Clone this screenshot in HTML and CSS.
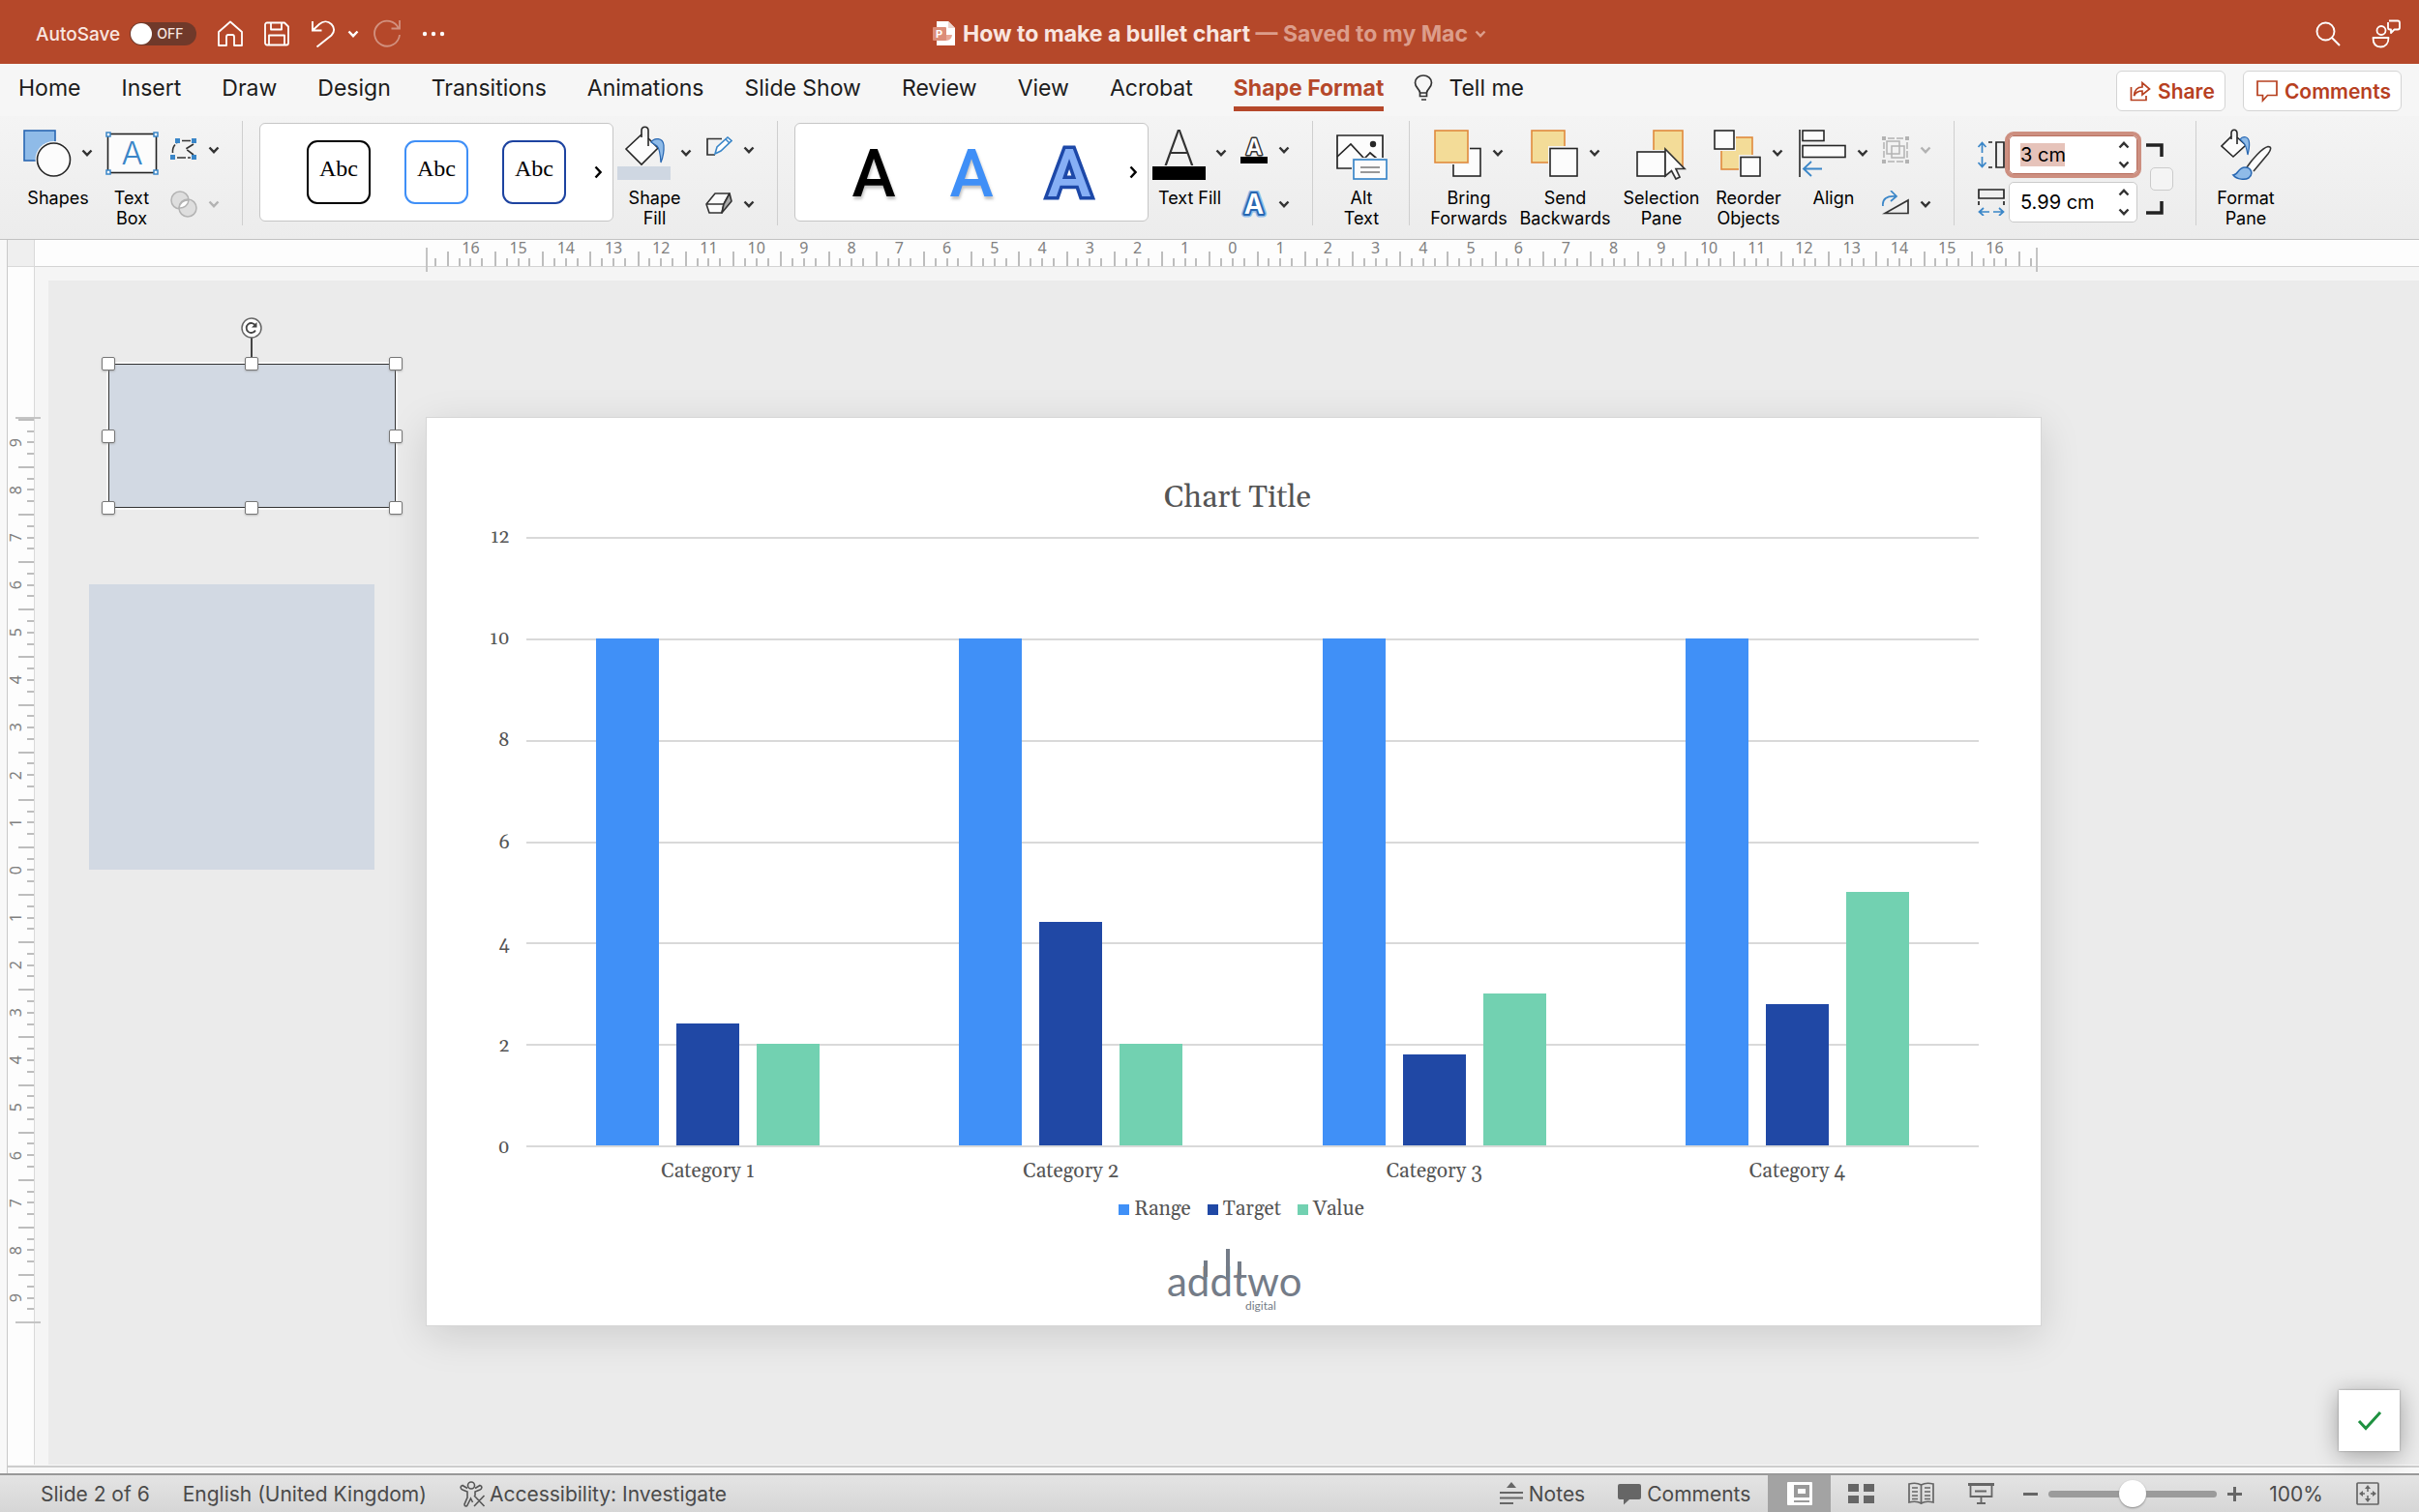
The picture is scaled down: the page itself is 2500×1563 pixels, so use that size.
FILE: index.html
```html
<!DOCTYPE html>
<html lang="en-GB">
<head>
<meta charset="utf-8">
<meta name="viewport" content="width=device-width, initial-scale=1">
<title>How to make a bullet chart</title>
<link rel="stylesheet" href="styles.css">
</head>
<body>
<svg class="defs" aria-hidden="true">
  <symbol id="chev" viewBox="0 0 12 8"><path d="M1.5 1.5 6 6.2 10.500 1.500" fill="none" stroke="currentColor" stroke-width="2.400"/></symbol>
  <symbol id="chev-up" viewBox="0 0 12 8"><path d="M1.500 6.500 6 1.800 10.500 6.500" fill="none" stroke="currentColor" stroke-width="2.400"/></symbol>
  <symbol id="chev-right" viewBox="0 0 8 14"><path d="M1.500 1.500 6.500 7 1.500 12.500" fill="none" stroke="currentColor" stroke-width="2.400"/></symbol>
</svg>

<header class="titlebar">
  <div class="quick">
    <label class="autosave" for="autosave">AutoSave</label>
    <span class="toggle"><input type="checkbox" id="autosave"><span class="toggle-text">OFF</span></span>
    <button class="qbtn" aria-label="Home"><svg width="26" height="28" viewBox="0 0 26 28"><path d="M1 12 13 1.500 25 12V26H17V17a2 2 0 0 0-2-2h-4a2 2 0 0 0-2 2V26H1Z" fill="none" stroke="#fff" stroke-width="1.800" stroke-linejoin="round"/></svg></button>
    <button class="qbtn" aria-label="Save"><svg width="26" height="28" viewBox="0 0 26 28"><path d="M3 2.500H21L25 6.500V23.500a2 2 0 0 1-2 2H3a2 2 0 0 1-2-2V4.500a2 2 0 0 1 2-2ZM7 3V9.500H18V3M5 25V15.500H21V25" fill="none" stroke="#fff" stroke-width="1.800" stroke-linejoin="round"/></svg></button>
    <span class="undo">
      <button class="qbtn" aria-label="Undo"><svg width="26" height="28" viewBox="0 0 26 28"><path d="M2 1V10.500H11.500M2 10.500 9 4C13 .500 18 .500 21.500 4s3.500 8 0 11.500L6.500 27.500" fill="none" stroke="#fff" stroke-width="1.900"/></svg></button>
      <button class="qbtn" aria-label="Undo options"><svg class="chev"><use href="#chev"/></svg></button>
    </span>
    <button class="qbtn faded" aria-label="Repeat"><svg width="28" height="30" viewBox="0 0 28 30"><path d="M27 1V9.500H18.500M26 9.500A13 13 0 1 0 27 16" fill="none" stroke="#fff" stroke-width="1.800"/></svg></button>
    <button class="qbtn" aria-label="More"><svg width="24" height="6" viewBox="0 0 24 6"><circle cx="3" cy="3" r="2.200" fill="#fff"/><circle cx="12" cy="3" r="2.200" fill="#fff"/><circle cx="21" cy="3" r="2.200" fill="#fff"/></svg></button>
  </div>
  <h1 class="doc">
    <svg width="24" height="26" viewBox="0 0 24 26"><path d="M4 0H16L23 7V25H4Z" fill="#fff"/><path d="M16 0V7H23Z" fill="#eed5ce"/><path d="M14 8a6 6 0 1 0 6 6h-6Z" fill="#e8a796"/><rect x="0" y="6" width="14" height="14" rx="1" fill="#dc8d78"/><text x="3" y="17" font-size="11" font-weight="700" fill="#fff">P</text></svg>
    <span>How to make a bullet chart <span class="saved">— Saved to my Mac</span></span>
    <svg class="chev saved"><use href="#chev"/></svg>
  </h1>
  <div class="quick right">
    <button class="qbtn" aria-label="Search"><svg width="26" height="26" viewBox="0 0 26 26"><circle cx="10.500" cy="10.500" r="9" fill="none" stroke="#fff" stroke-width="1.900"/><path d="M17 17 25 25" stroke="#fff" stroke-width="1.900"/></svg></button>
    <button class="qbtn" aria-label="Account and feedback"><svg width="30" height="30" viewBox="0 0 30 30"><g fill="none" stroke="#fff" stroke-width="1.800" stroke-linejoin="round"><circle cx="10" cy="11.500" r="4.500"/><path d="M1.500 19h16c0 6-3 9.500-8 9.500s-8-3.500-8-9.500ZM18 1.500h9a2 2 0 0 1 2 2v5a2 2 0 0 1-2 2h-3.500L20 14v-3.500h-1a2 2 0 0 1-2-2V3"/></g></svg></button>
  </div>
</header>

<nav class="tabs">
  <div class="tablist">
    <button>Home</button><button>Insert</button><button>Draw</button><button>Design</button><button>Transitions</button><button>Animations</button><button>Slide Show</button><button>Review</button><button>View</button><button>Acrobat</button><button class="active">Shape Format</button>
    <button class="tell"><svg width="20" height="28" viewBox="0 0 20 28"><path d="M6.500 19C6.500 15 1.500 14 1.500 8.500a8.500 7.500 0 0 1 17 0C18.500 14 13.500 15 13.500 19v3.500h-7ZM6.500 19h7M8 26h5" fill="none" stroke="#333" stroke-width="1.700"/></svg>Tell me</button>
  </div>
  <div class="actions">
    <button class="pill"><svg width="22" height="24" viewBox="0 0 22 24"><path d="M1.500 8V21.500H17V17M4.500 17C5 11 8 8 13 8V3.500L20.500 10 13 16V12C9 12 6.500 13 4.500 17Z" fill="none" stroke="#b7401f" stroke-width="1.700"/></svg>Share</button>
    <button class="pill"><svg width="22" height="24" viewBox="0 0 22 24"><path d="M1 2H21V16.500H11.500L6.500 22V16.500H1Z" fill="none" stroke="#b7401f" stroke-width="1.700"/></svg>Comments</button>
  </div>
</nav>

<section class="ribbon" aria-label="Shape Format">
  <div class="group">
    <button class="tool w72"><span class="pic"><svg width="50" height="56" viewBox="0 0 50 56"><rect x="1" y="5" width="32" height="31" fill="#8fbbe8" stroke="#2867b2" stroke-width="1.600"/><circle cx="31.500" cy="35" r="19" fill="#f4f4f4"/><circle cx="31.500" cy="35" r="17" fill="#fcfcfc" stroke="#262626" stroke-width="1.600"/></svg><svg class="chev"><use href="#chev"/></svg></span><span>Shapes</span></button>
    <button class="tool w55"><span class="pic"><svg width="55" height="56" viewBox="0 0 55 56"><rect x="2.500" y="8.500" width="50" height="40" fill="#fcfcfc" stroke="#222" stroke-width="1.600"/><g fill="#fff" stroke="#3a86c8" stroke-width="1.500"><rect x="1" y="7" width="4" height="4"/><rect x="50" y="7" width="4" height="4"/><rect x="1" y="46" width="4" height="4"/><rect x="50" y="46" width="4" height="4"/></g><text x="27.500" y="40" font-size="33" font-weight="300" text-anchor="middle" fill="#3a86c8">A</text></svg></span><span>Text<br>Box</span></button>
    <div class="stack">
      <button class="mini" aria-label="Edit shape"><svg width="28" height="28" viewBox="0 0 28 28"><path d="M12 4.500H21M2.500 17C2 12 4.500 8 7 7M24 8 16 13 24 19M7 22H21" fill="none" stroke="#333" stroke-width="1.600" stroke-dasharray="9 2"/><g fill="#3a86c8"><rect x="5" y="2" width="5" height="5"/><rect x="22" y="2" width="5" height="5"/><rect x="0" y="19" width="5" height="5"/><rect x="22" y="19" width="5" height="5"/></g></svg><svg class="chev"><use href="#chev"/></svg></button>
      <button class="mini off" aria-label="Merge shapes" disabled><svg width="28" height="28" viewBox="0 0 28 28"><g fill="#dedede" stroke="#b3b3b3" stroke-width="1.500"><circle cx="10" cy="10" r="9"/><circle cx="18" cy="18" r="9"/><path d="M9 18A9 9 0 0 1 19 10 9 9 0 0 1 9 18Z" fill="#fff"/></g></svg><svg class="chev"><use href="#chev"/></svg></button>
    </div>
  </div>
  <div class="group styles">
    <div class="gallery">
      <button class="abc k">Abc</button><button class="abc b">Abc</button><button class="abc n">Abc</button>
      <button class="more" aria-label="More styles"><svg width="8" height="14"><use href="#chev-right"/></svg></button>
    </div>
    <button class="tool w75"><span class="pic"><svg width="55" height="56" viewBox="0 0 55 56"><rect x="0" y="42" width="55" height="14" fill="#cfd7e2"/><path d="M25 9 9 24 25 40 42 23 32 13" fill="#fcfcfc" stroke="#262626" stroke-width="1.600"/><path d="M25 12V5c0-5 7-5 7 0V21" fill="none" stroke="#262626" stroke-width="1.600"/><path d="M35 17C38 12 47 12 48 20 48.500 27 47 33 45 38 44.500 30 44 24 41 21Z" fill="#8fbbe8" stroke="#2867b2" stroke-width="1.200"/></svg><svg class="chev"><use href="#chev"/></svg></span><span>Shape<br>Fill</span></button>
    <div class="stack">
      <button class="mini" aria-label="Shape outline"><svg width="28" height="28" viewBox="0 0 28 28"><path d="M17 2.500H2V19H10" fill="none" stroke="#333" stroke-width="1.700"/><path d="M10 18 12 11 23 1 27 4.500 16 15Z M21 3 25 7" fill="#fff" stroke="#3a86c8" stroke-width="1.600"/></svg><svg class="chev"><use href="#chev"/></svg></button>
      <button class="mini" aria-label="Shape effects"><svg width="28" height="28" viewBox="0 0 28 28"><path d="M1 14 10 3H25L19 14ZM1 14 4 23H17L19 14" fill="#fcfcfc" stroke="#333" stroke-width="1.600" stroke-linejoin="round"/><path d="M25 3 27 11 17 23 19 14Z" fill="#aaa" stroke="#333" stroke-width="1.600" stroke-linejoin="round"/></svg><svg class="chev"><use href="#chev"/></svg></button>
    </div>
  </div>
  <div class="group styles">
    <div class="gallery">
      <button class="wa k">A</button><button class="wa b">A</button><button class="wa n">A</button>
      <button class="more" aria-label="More text styles"><svg width="8" height="14"><use href="#chev-right"/></svg></button>
    </div>
    <button class="tool w75"><span class="pic"><svg width="55" height="56" viewBox="0 0 55 56"><text x="27.500" y="41" font-size="50" font-weight="200" text-anchor="middle" fill="#333">A</text><rect x="0" y="42" width="55" height="14"/></svg><svg class="chev"><use href="#chev"/></svg></span><span>Text Fill</span></button>
    <div class="stack">
      <button class="mini" aria-label="Text outline"><svg width="28" height="28" viewBox="0 0 28 28"><text class="outlined" x="14" y="19" font-size="23" text-anchor="middle" fill="#fff" stroke="#333" stroke-width="3">A</text><rect x="0" y="21" width="28" height="7"/></svg><svg class="chev"><use href="#chev"/></svg></button>
      <button class="mini" aria-label="Text effects"><svg width="28" height="28" viewBox="0 0 28 28"><text class="outlined" x="14" y="24" font-size="28" text-anchor="middle" fill="#fff" stroke="#8fbbe8" stroke-width="7">A</text><text class="outlined" x="14" y="24" font-size="28" text-anchor="middle" fill="#fff" stroke="#2867b2" stroke-width="4">A</text></svg><svg class="chev"><use href="#chev"/></svg></button>
    </div>
  </div>
  <div class="group alt">
    <button class="tool w55"><span class="pic"><svg width="53" height="56" viewBox="0 0 53 56"><path d="M1 10H48V44H1Z" fill="#fcfcfc" stroke="#262626" stroke-width="1.700"/><path d="M1 32 15 19 29 34 35 28 42 34" fill="none" stroke="#262626" stroke-width="1.700"/><circle cx="38" cy="19" r="3.200" fill="#262626"/><rect x="16" y="33" width="37" height="23" fill="#f4f4f4"/><rect x="18" y="35" width="34" height="20" fill="#fcfcfc" stroke="#3a86c8" stroke-width="1.700"/><path d="M25 43H45M25 48H45" stroke="#777" stroke-width="1.500"/></svg></span><span>Alt<br>Text</span></button>
  </div>
  <div class="group arrange">
    <button class="tool w80"><span class="pic"><svg width="50" height="56" viewBox="0 0 50 56"><rect x="20" y="23.500" width="28" height="28.500" fill="#fcfcfc" stroke="#262626" stroke-width="1.600"/><rect x="0" y="4" width="37" height="36" fill="#f4f4f4"/><rect x="1" y="5" width="34" height="33" fill="#f3dc98" stroke="#e08a3c" stroke-width="1.600"/></svg><svg class="chev"><use href="#chev"/></svg></span><span>Bring<br>Forwards</span></button>
    <button class="tool w95"><span class="pic"><svg width="50" height="56" viewBox="0 0 50 56"><rect x="1" y="5" width="34" height="33" fill="#f3dc98" stroke="#e08a3c" stroke-width="1.600"/><rect x="18" y="21" width="32" height="33" fill="#f4f4f4"/><rect x="20" y="23.500" width="28" height="28.500" fill="#fcfcfc" stroke="#262626" stroke-width="1.600"/></svg><svg class="chev"><use href="#chev"/></svg></span><span>Send<br>Backwards</span></button>
    <button class="tool w80"><span class="pic"><svg width="52" height="56" viewBox="0 0 52 56"><rect x="18" y="5" width="30" height="38" fill="#f3dc98" stroke="#e08a3c" stroke-width="1.600"/><rect x="0" y="25" width="31" height="29" fill="#f4f4f4"/><rect x="1" y="27" width="29" height="25" fill="#fcfcfc" stroke="#262626" stroke-width="1.600"/><path d="M30 24V52L36.500 46.500 41 55 45 53 41 44.500H50Z" fill="#fcfcfc" stroke="#333" stroke-width="1.700"/></svg></span><span>Selection<br>Pane</span></button>
    <button class="tool w76"><span class="pic"><svg width="50" height="56" viewBox="0 0 50 56"><rect x="8" y="12" width="32" height="33" fill="#f3dc98" stroke="#e08a3c" stroke-width="1.600"/><rect x="0" y="4" width="23" height="22" fill="#f4f4f4"/><rect x="1" y="5" width="20" height="19" fill="#fcfcfc" stroke="#262626" stroke-width="1.600"/><rect x="26" y="30" width="24" height="24" fill="#f4f4f4"/><rect x="28" y="32.500" width="20" height="19.500" fill="#fcfcfc" stroke="#262626" stroke-width="1.600"/></svg><svg class="chev"><use href="#chev"/></svg></span><span>Reorder<br>Objects</span></button>
    <button class="tool w76"><span class="pic"><svg width="50" height="56" viewBox="0 0 50 56"><path d="M1 4V53" stroke="#262626" stroke-width="1.600"/><g fill="#fcfcfc" stroke="#262626" stroke-width="1.600"><rect x="4" y="5" width="22" height="10.500"/><rect x="4" y="20.500" width="44" height="12"/></g><path d="M5 44.500H24M13 37 5 44.500 13 52" fill="none" stroke="#3a86c8" stroke-width="1.800"/></svg><svg class="chev"><use href="#chev"/></svg></span><span>Align</span></button>
    <div class="stack">
      <button class="mini off" aria-label="Group" disabled><svg width="28" height="28" viewBox="0 0 28 28"><path d="M6 2H22M6 26H22M2 6V22M26 6V22" fill="none" stroke="#b3b3b3" stroke-width="1.500" stroke-dasharray="7 2"/><path d="M5 5H18V18H5ZM10 10H23V22H10Z" fill="none" stroke="#b3b3b3" stroke-width="1.500"/><path d="M0 0H4V4H0ZM24 0H28V4H24ZM0 24H4V28H0ZM24 24H28V28H24Z" fill="#b3b3b3"/></svg><svg class="chev"><use href="#chev"/></svg></button>
      <button class="mini" aria-label="Rotate"><svg width="28" height="28" viewBox="0 0 28 28"><path d="M3 23.500H27V10Z" fill="none" stroke="#333" stroke-width="1.700"/><path d="M1 16C0 9 5 5 14 6M9 0 15 6 9 11" fill="none" stroke="#3a86c8" stroke-width="1.700"/></svg><svg class="chev"><use href="#chev"/></svg></button>
    </div>
  </div>
  <div class="group size">
    <div class="fields">
      <div class="field focus">
        <label for="height" aria-label="Height"><svg width="28" height="28" viewBox="0 0 28 28"><path d="M4.500 2V12M.500 6 4.500 1.500 8.500 6M4.500 16V26M.500 22 4.500 26.500 8.500 22" fill="none" stroke="#3a86c8" stroke-width="1.700"/><path d="M11 1H15M11 27H15M19 1H27V27H19Z" fill="none" stroke="#262626" stroke-width="1.700"/></svg></label>
        <span class="box"><input id="height" type="text" value="3 cm" size="4"><span class="spin"><button aria-label="Increase height"><svg class="chev"><use href="#chev-up"/></svg></button><button aria-label="Decrease height"><svg class="chev"><use href="#chev"/></svg></button></span></span>
      </div>
      <div class="field">
        <label for="width" aria-label="Width"><svg width="28" height="28" viewBox="0 0 28 28"><path d="M1 1H27V10H1ZM1 13V17M27 13V17" fill="none" stroke="#262626" stroke-width="1.700"/><path d="M2 24H12M6 20 1.500 24 6 28M16 24H26M22 20 26.500 24 22 28" fill="none" stroke="#3a86c8" stroke-width="1.700"/></svg></label>
        <span class="box"><input id="width" type="text" value="5.99 cm" size="7"><span class="spin"><button aria-label="Increase width"><svg class="chev"><use href="#chev-up"/></svg></button><button aria-label="Decrease width"><svg class="chev"><use href="#chev"/></svg></button></span></span>
      </div>
    </div>
    <div class="lock">
      <svg width="18" height="15" viewBox="0 0 18 15"><path d="M0 2H16V14" fill="none" stroke="#222" stroke-width="3.500"/></svg>
      <input type="checkbox" aria-label="Lock aspect ratio">
      <svg width="18" height="15" viewBox="0 0 18 15"><path d="M0 13H16V1" fill="none" stroke="#222" stroke-width="3.500"/></svg>
    </div>
  </div>
  <div class="group">
    <button class="tool w55"><span class="pic"><svg width="53" height="56" viewBox="0 0 53 56"><path d="M11 11 1 21 13 32 26 20 17 12" fill="#fcfcfc" stroke="#262626" stroke-width="1.600"/><path d="M11 14V8c0-5 6-5 6 0V19" fill="none" stroke="#262626" stroke-width="1.600"/><path d="M20 14C23 10 29 11 29.500 17 30 22 29 26 28 30 27 24 26 19 23 17Z" fill="#8fbbe8" stroke="#2867b2" stroke-width="1.200"/><path d="M27 43C33 34 43 23 49 21.500 53 21.500 52 25 49 29L34 47" fill="#fcfcfc" stroke="#333" stroke-width="1.600"/><path d="M13 51C18 51 18 43 25 43 32 43 34 50 29 54 25 56 17 56 13 51Z" fill="#8fbbe8" stroke="#2867b2" stroke-width="1.500"/></svg></span><span>Format<br>Pane</span></button>
  </div>
</section>

<main class="workspace">
  <div class="corner"></div>
  <div class="hruler"><div class="track">
    <span>16</span><span>15</span><span>14</span><span>13</span><span>12</span><span>11</span><span>10</span><span>9</span><span>8</span><span>7</span><span>6</span><span>5</span><span>4</span><span>3</span><span>2</span><span>1</span><span>0</span><span>1</span><span>2</span><span>3</span><span>4</span><span>5</span><span>6</span><span>7</span><span>8</span><span>9</span><span>10</span><span>11</span><span>12</span><span>13</span><span>14</span><span>15</span><span>16</span>
  </div></div>
  <div class="vruler"><div class="track">
    <span><b>9</b></span><span><b>8</b></span><span><b>7</b></span><span><b>6</b></span><span><b>5</b></span><span><b>4</b></span><span><b>3</b></span><span><b>2</b></span><span><b>1</b></span><span><b>0</b></span><span><b>1</b></span><span><b>2</b></span><span><b>3</b></span><span><b>4</b></span><span><b>5</b></span><span><b>6</b></span><span><b>7</b></span><span><b>8</b></span><span><b>9</b></span>
  </div></div>
  <div class="surround">
    <div class="canvas">
      <div class="shape selected">
        <i class="stem"></i>
        <svg class="rotate" width="22" height="22" viewBox="0 0 22 22"><circle cx="11" cy="11" r="10" fill="#fff" stroke="#666" stroke-width="1.500"/><path d="M15 13.500A5 5 0 1 1 15 8.500" fill="none" stroke="#444" stroke-width="1.800"/><path d="M16.500 5V10.500H11Z" fill="#444"/></svg>
        <i class="handle n w"></i><i class="handle n c"></i><i class="handle n e"></i>
        <i class="handle m w"></i><i class="handle m e"></i>
        <i class="handle s w"></i><i class="handle s c"></i><i class="handle s e"></i>
      </div>
      <div class="shape plain"></div>
      <article class="slide">
        <h2>Chart Title</h2>
        <div class="chart">
          <div class="yaxis"><span>12</span><span>10</span><span>8</span><span>6</span><span>4</span><span>2</span><span>0</span></div>
          <div class="plot">
            <div class="grid"><i></i><i></i><i></i><i></i><i></i><i></i></div>
            <div class="bars">
              <div class="cat"><i class="range" style="height:83.3%"></i><i class="target" style="height:20%"></i><i class="value" style="height:16.7%"></i></div>
              <div class="cat"><i class="range" style="height:83.3%"></i><i class="target" style="height:36.7%"></i><i class="value" style="height:16.7%"></i></div>
              <div class="cat"><i class="range" style="height:83.3%"></i><i class="target" style="height:15%"></i><i class="value" style="height:25%"></i></div>
              <div class="cat"><i class="range" style="height:83.3%"></i><i class="target" style="height:23.3%"></i><i class="value" style="height:41.7%"></i></div>
            </div>
          </div>
          <div class="xaxis"><span>Category 1</span><span>Category 2</span><span>Category 3</span><span>Category 4</span></div>
        </div>
        <ul class="legend"><li><i class="range"></i>Range</li><li><i class="target"></i>Target</li><li><i class="value"></i>Value</li></ul>
        <svg class="logo" width="138" height="66" viewBox="0 0 138 66" role="img" aria-label="addtwo digital">
          <g fill="#747c88"><text x="0" y="50" font-family="Lato, sans-serif" font-size="42">addtwo</text><text x="81" y="64" font-family="Lato, sans-serif" font-size="12">digital</text></g>
          <path d="M40 13V30M63 1V30M75 14V32" stroke="#747c88" stroke-width="4"/>
        </svg>
      </article>
      <button class="done" aria-label="Done"><svg width="26" height="22" viewBox="0 0 26 22"><path d="M2 11 9 18.500 24 2" fill="none" stroke="#1e9140" stroke-width="3"/></svg></button>
    </div>
  </div>
  <div class="edge"></div>
</main>

<footer class="status">
  <div class="info">
    <span>Slide 2 of 6</span><button>English (United Kingdom)</button>
    <button class="acc"><svg width="27" height="27" viewBox="0 0 27 27"><g fill="none" stroke="#555" stroke-width="1.600"><circle cx="12" cy="4.500" r="3.500"/><path d="M8 7.500 3 4.500C0 5.500 1 8 3 9L8 11V17L5 24C5 26.500 7.500 26.500 8 25L11.500 18 13.500 22M16 7.500 21 4.500C24 5.500 23 8 21 9L16 11V15M15 15 25.500 26M25.500 15 15 26"/></g></svg>Accessibility: Investigate</button>
  </div>
  <div class="views">
    <button class="txt"><svg width="24" height="24" viewBox="0 0 24 24"><path d="M12 0 17 6H7Z" fill="#666"/><path d="M0 11H24M0 16.500H24M0 22H14" stroke="#666" stroke-width="2"/></svg>Notes</button>
    <button class="txt"><svg width="24" height="24" viewBox="0 0 24 24"><path d="M2 2H22A2 2 0 0 1 24 4V16A2 2 0 0 1 22 18H12L6 23.500V18H2A2 2 0 0 1 0 16V4A2 2 0 0 1 2 2Z" fill="#666"/></svg>Comments</button>
    <button class="view on" aria-label="Normal view"><svg width="26" height="24" viewBox="0 0 26 24"><rect width="26" height="24" rx="1" fill="#fff"/><path d="M7 3H23V16H7ZM7 19H23V21H7Z" fill="#9a9a9a"/><path d="M11 7H19V12H11Z" fill="#fff"/></svg></button>
    <button class="view" aria-label="Slide sorter"><svg width="27" height="20" viewBox="0 0 27 20"><path d="M0 0H11V8H0ZM16 0H27V8H16ZM0 12H11V20H0ZM16 12H27V20H16Z" fill="#666"/></svg></button>
    <button class="view" aria-label="Reading view"><svg width="27" height="24" viewBox="0 0 27 24"><g fill="none" stroke="#666" stroke-width="1.700"><path d="M13.500 3C10 1 5 1 1 2V21C5 20 10 20 13.500 22 17 20 22 20 26 21V2C22 1 17 1 13.500 3ZM13.500 3V23M4 6H10M4 10H10M4 14H10M4 17.500H10M17 6H23M17 10H23M17 14H23M17 17.500H23"/></g></svg></button>
    <button class="view" aria-label="Slide show"><svg width="27" height="22" viewBox="0 0 27 22"><path d="M0 1.500H27" stroke="#666" stroke-width="3"/><path d="M2.500 2V14H24.500V2M7 8.500H19M13.500 14V20M9 21H18" fill="none" stroke="#666" stroke-width="1.800"/></svg></button>
    <div class="zoom">
      <button aria-label="Zoom out"><svg width="15" height="15" viewBox="0 0 15 15"><path d="M0 7.500H15" stroke="#666" stroke-width="3"/></svg></button>
      <input type="range" min="0" max="100" value="50" aria-label="Zoom">
      <button aria-label="Zoom in"><svg width="15" height="15" viewBox="0 0 15 15"><path d="M0 7.500H15M7.500 0V15" stroke="#666" stroke-width="3"/></svg></button>
    </div>
    <button class="pct">100%</button>
    <button class="fit" aria-label="Fit to window"><svg width="24" height="24" viewBox="0 0 24 24"><rect x="1" y="1" width="22" height="22" rx="1" fill="none" stroke="#666" stroke-width="1.700"/><path d="M12 3 15 7H9ZM12 21 15 17H9ZM3 12 7 9V15ZM21 12 17 9V15Z" fill="#666"/><path d="M12 6V10M12 14V18M6 12H9M15 12H18" stroke="#666" stroke-width="1.500"/></svg></button>
  </div>
</footer>
</body>
</html>
```
FILE: styles.css
```css
:root {
  --brand: #b5482a;
  --slide-w: calc((100vw - 50px) * 0.681);
  --slide-h: calc(var(--slide-w) * 9 / 16);
  --tick: linear-gradient(#bdbdbd, #bdbdbd);
}
* { box-sizing: border-box; }
body {
  margin: 0;
  min-height: 100vh;
  display: flex;
  flex-direction: column;
  font-family: Inter, "Liberation Sans", sans-serif;
  font-size: 18px;
  color: #1c1c1c;
  background: #f8f8f8;
}
button {
  font: inherit;
  color: inherit;
  background: none;
  border: 0;
  padding: 0;
  white-space: nowrap;
}
svg { display: block; flex: none; }
.defs { position: absolute; width: 0; height: 0; }
.chev { width: 12px; height: 8px; color: #333; }
.outlined { font-weight: 600; paint-order: stroke fill; stroke-linejoin: round; }

/* title bar */
.titlebar {
  display: grid;
  grid-template-columns: 1fr auto 1fr;
  align-items: center;
  height: 66px;
  padding: 4px 37px 0;
  background: var(--brand);
  color: #f9e6e0;
}
.quick { display: flex; align-items: center; gap: 22px; }
.quick.right { justify-content: flex-end; gap: 32px; margin-right: -18px; }
.quick .chev { color: #fff; }
.autosave { font-size: 19px; font-weight: 500; margin-right: -12px; }
.toggle {
  position: relative;
  width: 69px;
  height: 24px;
}
.toggle input {
  appearance: none;
  display: block;
  margin: 0;
  width: 69px;
  height: 24px;
  border-radius: 12px;
  background: #70392a;
}
.toggle input::before {
  content: "";
  display: block;
  width: 22px;
  height: 22px;
  margin: 1px;
  float: left;
  border-radius: 50%;
  background: #fff;
}
.toggle-text {
  position: absolute;
  left: 28px;
  top: 0;
  font-size: 14px;
  line-height: 24px;
  font-weight: 500;
}
.undo { display: flex; align-items: center; gap: 12px; margin-right: -7px; }
.faded { opacity: 0.4; }
.doc {
  display: flex;
  align-items: center;
  gap: 7px;
  margin: 0;
  font-size: 23px;
  font-weight: 700;
}
.saved, .doc .chev { color: #dc9d8b; }

/* tabs */
.tabs {
  display: flex;
  justify-content: space-between;
  height: 54px;
  padding: 0 18px 0 19px;
  background: #f6f6f6;
}
.tablist { display: flex; align-items: flex-start; gap: 42px; }
.tablist button {
  height: 49px;
  padding: 13px 0 7px;
  border-bottom: 5px solid transparent;
  font-size: 23px;
  line-height: 24px;
  font-weight: 400;
}
.tablist .active { color: var(--brand); border-color: var(--brand); font-weight: 700; }
.tablist .tell { display: flex; align-items: center; gap: 16px; margin-left: -11px; }
.actions { display: flex; gap: 18px; padding-top: 7px; }
.pill {
  display: flex;
  align-items: center;
  gap: 7px;
  height: 42px;
  padding: 0 10px 0 13px;
  border: 1px solid #d4d4d4;
  border-radius: 6px;
  background: #fff;
  color: #b7401f;
  font-size: 21px;
  font-weight: 600;
}

/* ribbon */
.ribbon {
  display: flex;
  height: 128px;
  padding: 5px 0 14px;
  border-bottom: 1px solid #c2c2c2;
  background: linear-gradient(#f4f4f4, #ececec);
  color: #000;
}
.group {
  display: flex;
  align-items: flex-start;
  gap: 13px;
  padding: 0 23px 0 24px;
  border-right: 1px solid #cfcfcf;
}
.group:last-child { border: 0; }
.group.styles { gap: 15px; padding-left: 17px; }
.group.alt { padding: 0 22px 0 23px; }
.group.arrange { gap: 12px; padding-left: 21px; }
.tool {
  display: flex;
  flex-direction: column;
  align-items: center;
  gap: 8px;
  padding-top: 5px;
  line-height: 21px;
}
.w55 { width: 54px; }
.w72 { width: 72px; }
.w75 { width: 75px; }
.w76 { width: 76px; }
.w80 { width: 80px; }
.w95 { width: 95px; }
.pic { display: flex; align-items: center; gap: 10px; }
.stack { display: flex; flex-direction: column; gap: 28px; padding-top: 16px; }
.mini { display: flex; align-items: center; gap: 11px; height: 28px; }
.mini.off .chev { color: #b3b3b3; }
.gallery {
  display: flex;
  align-items: center;
  width: 366px;
  height: 102px;
  margin: 2px -10px 0 0;
  padding: 0 11px 0 48px;
  border: 1px solid #c6c6c6;
  border-radius: 6px;
  background: #fff;
}
.gallery .k, .gallery .b { margin-right: 35px; }
.more { margin-left: auto; }
.abc {
  flex: none;
  width: 66px;
  height: 66px;
  padding-bottom: 7px;
  border: 2px solid;
  border-radius: 11px;
  font: 24px "Liberation Serif", serif;
}
.abc.k { border-color: #000; }
.abc.b { border-color: #3f8ff7; }
.abc.n { border-color: #1d43a0; }
.wa {
  flex: none;
  width: 66px;
  padding-top: 4px;
  font: 500 68px/90px Roboto, sans-serif;
  text-shadow: 1px 3px 3px #9999;
}
.wa.b { color: #3f8ff7; }
.wa.n {
  color: #86aff5;
  -webkit-text-stroke: 7px #1d48a8;
  paint-order: stroke fill;
  text-shadow: none;
}
.group.size { gap: 9px; }
.fields { display: flex; flex-direction: column; gap: 8px; padding-top: 15px; }
.field { display: flex; align-items: center; gap: 4px; }
.box {
  display: flex;
  align-items: center;
  justify-content: space-between;
  width: 133px;
  height: 42px;
  padding: 0 7px 0 11px;
  border: 1px solid #cacaca;
  border-radius: 5px;
  background: #fff;
}
.focus .box { height: 40px; border-color: #b87060; outline: 4px solid #cd8f80; }
.box input { width: 76px; height: 24px; padding: 0; border: 0; outline: 0; background: none; font: 20px Inter, sans-serif; color: #000; }
.focus input { width: 46px; background: #e6c3ba; }
.spin { display: flex; flex-direction: column; gap: 12px; }
.lock { display: flex; flex-direction: column; align-items: flex-start; gap: 10px; padding-top: 23px; }
.lock input {
  appearance: none;
  width: 24px;
  height: 24px;
  margin: 0 0 0 4px;
  border: 1px solid #cbcbcb;
  border-radius: 5px;
  background: #f4f4f4;
}

/* workspace */
.workspace {
  flex: 1;
  display: grid;
  grid-template-columns: 28px 1fr;
  grid-template-rows: 28px 1fr 9px;
  margin-left: 7px;
  border-left: 1px solid #c9c9c9;
  color: #808080;
  font-family: "Noto Sans", sans-serif;
  font-size: 16px;
}
.corner { background: #efefef; border: solid #d9d9d9; border-width: 0 1px 1px 0; }
.hruler { padding-left: 14px; background: #fdfdfd; border-bottom: 1px solid #d4d4d4; }
.hruler .track {
  position: relative;
  display: flex;
  width: var(--slide-w);
  height: 27px;
  margin: 0 auto;
  padding: 0 23px 0 21px;
  background:
    var(--tick) 8px 100% / 2px 8px no-repeat,
    var(--tick) calc(100% - 9px) 100% / 2px 8px no-repeat,
    var(--tick) calc(100% - 21px) 100% / 2px 15px no-repeat;
}
.hruler span {
  flex: 1 1 0;
  text-align: center;
  line-height: 16px;
  background:
    var(--tick) 0 100% / 2px 15px no-repeat,
    var(--tick) 25% 100% / 2px 8px no-repeat,
    var(--tick) 50% 100% / 2px 8px no-repeat,
    var(--tick) 75% 100% / 2px 8px no-repeat;
}
.hruler .track::before, .hruler .track::after {
  content: "";
  position: absolute;
  top: 8px;
  left: -1px;
  width: 2px;
  height: 25px;
  background: #c4c4c4;
}
.hruler .track::after { left: auto; right: 3px; }
.vruler {
  display: flex;
  align-items: center;
  padding: 14px 0 2px;
  background: #fdfdfd;
  border-right: 1px solid #d9d9d9;
}
.vruler .track {
  position: relative;
  display: flex;
  flex-direction: column;
  width: 27px;
  height: var(--slide-h);
  padding: 1px 0 4px;
}
.vruler span {
  flex: 1 1 0;
  display: flex;
  align-items: center;
  background:
    var(--tick) 100% 0 / 16px 2px no-repeat,
    var(--tick) 100% 25% / 7px 2px no-repeat,
    var(--tick) 100% 50% / 7px 2px no-repeat,
    var(--tick) 100% 75% / 7px 2px no-repeat;
}
.vruler b { font-weight: 400; width: 16px; line-height: 16px; writing-mode: vertical-rl; transform: rotate(180deg); }
.vruler .track::before, .vruler .track::after {
  content: "";
  position: absolute;
  left: 8px;
  top: -1px;
  width: 26px;
  height: 2px;
  background: #c4c4c4;
}
.vruler .track::after { top: auto; bottom: 2px; }
.surround { display: flex; padding: 14px 0 0 14px; background: #f5f5f5; }
.canvas {
  position: relative;
  flex: 1;
  display: flex;
  align-items: center;
  justify-content: center;
  padding-bottom: 2px;
  background: #ebebeb;
}
.edge { grid-column: 1 / -1; margin-top: 1px; border-top: 2px solid #cdcdcd; background: #f8f8f8; }

.shape { position: absolute; background: #d2d9e3; }
.plain { left: 42px; top: 314px; width: 295px; height: 295px; }
.selected { left: 62px; top: 86px; width: 297px; height: 149px; border: 1px solid #333; box-shadow: 0 0 0 2px #fafafa; }
.stem { position: absolute; left: 146px; top: -28px; width: 2px; height: 28px; background: #444; }
.rotate { position: absolute; left: 136px; top: -49px; }
.handle {
  position: absolute;
  width: 14px;
  height: 14px;
  border: 1px solid #777;
  border-radius: 2px;
  background: #fff;
  box-shadow: 0 1px 2px #8888;
}
.handle.n { top: -8px; }
.handle.m { top: 67px; }
.handle.s { bottom: -8px; }
.handle.w { left: -8px; }
.handle.c { left: 140px; }
.handle.e { right: -8px; }

/* slide and chart */
.slide {
  display: flex;
  flex-direction: column;
  align-items: center;
  width: var(--slide-w);
  height: var(--slide-h);
  padding: 63px 0 14px;
  background: #fff;
  box-shadow: 0 0 0 1px #d6d6d6, 0 10px 40px #0002;
  color: #555;
  font-family: Georgia, Gelasio, "Liberation Serif", serif;
  font-size: 21px;
  line-height: 24px;
}
.slide h2 { margin: 0 0 20px; padding-left: 8px; font-size: 32px; line-height: 40px; font-weight: 400; }
.chart {
  flex: 1;
  align-self: stretch;
  display: grid;
  grid-template-columns: 29px 1fr;
  grid-template-rows: 1fr 24px;
  gap: 13px 17px;
  margin: 0 64px 0 57px;
}
.yaxis { display: flex; flex-direction: column; justify-content: space-between; margin: -12px 0; text-align: right; font-size: 20px; }
.plot { display: grid; border-bottom: 2px solid #d9d9d9; }
.grid, .bars { grid-area: 1 / 1; display: flex; }
.grid { flex-direction: column; }
.grid i { flex: 1; border-top: 2px solid #d9d9d9; }
.cat { flex: 1; display: flex; align-items: flex-end; justify-content: center; gap: 18px; }
.cat i { width: 65px; }
.range { background: #4090f7; }
.target { background: #2048a5; }
.value { background: #72d1b1; }
.xaxis { grid-column: 2; display: flex; }
.xaxis span { flex: 1; text-align: center; }
.legend { display: flex; gap: 17px; margin: 15px 0 28px; padding: 0 0 0 16px; list-style: none; }
.legend li { display: flex; align-items: center; gap: 5px; }
.legend i { width: 11px; height: 11px; }
.done {
  position: absolute;
  right: 20px;
  bottom: 14px;
  display: grid;
  place-items: center;
  width: 63px;
  height: 63px;
  background: #fff;
  box-shadow: 0 0 2px #888, 0 4px 24px #0005;
}

/* status bar */
.status {
  display: flex;
  justify-content: space-between;
  height: 40px;
  padding: 0 41px 0 42px;
  border-top: 2px solid #999;
  background: linear-gradient(#e4e4e4, #d6d6d6);
  color: #4a4a4a;
  font-size: 21px;
}
.info, .views, .zoom { display: flex; align-items: center; }
.info { gap: 34px; }
.acc { display: flex; align-items: center; gap: 4px; }
.txt { display: flex; align-items: center; gap: 6px; margin-right: 34px; }
.txt + .view { margin-left: -16px; }
.view { display: grid; place-items: center; align-self: stretch; width: 62px; }
.view.on { width: 65px; background: #a3a3a3; }
.zoom { gap: 11px; margin-left: 13px; }
.zoom input { appearance: none; width: 174px; height: 28px; margin: 0; background: none; }
.zoom input::-webkit-slider-runnable-track { height: 7px; border-radius: 4px; background: #9b9b9b; }
.zoom input::-webkit-slider-thumb {
  appearance: none;
  width: 28px;
  height: 28px;
  margin-top: -11px;
  border-radius: 50%;
  background: #fff;
  box-shadow: 0 1px 2px #888;
}
.pct { margin: 0 34px 0 28px; }
```
